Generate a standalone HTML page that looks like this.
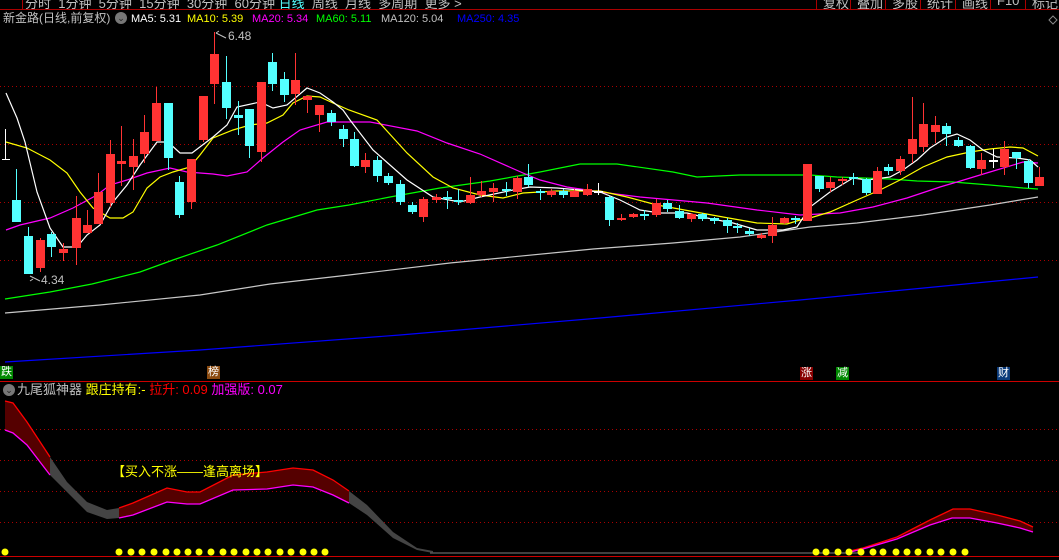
<!DOCTYPE html>
<html><head><meta charset="utf-8">
<style>
html,body{margin:0;padding:0;background:#000;width:1059px;height:560px;overflow:hidden;font-family:"Liberation Sans","Noto Sans CJK SC",sans-serif;}
.t{position:absolute;white-space:nowrap;font-size:12px;line-height:14px;}
.m{font-size:11px;top:12px;}
.tab{position:absolute;top:-7px;font-size:13px;color:#c0c0c0;white-space:nowrap;}
.btn{position:absolute;top:-7px;height:16px;font-size:13px;color:#c0c0c0;border-left:1px solid #a00;padding-left:6px;}
.mk{position:absolute;width:13px;height:13px;font-size:11px;line-height:13px;color:#fff;text-align:center;}
</style></head><body>
<div class="tab" style="left:25px;">分时 &nbsp;1分钟 &nbsp;5分钟 &nbsp;15分钟 &nbsp;30分钟 &nbsp;60分钟 <span style="color:#5ff">日线</span> &nbsp;周线 &nbsp;月线 &nbsp;多周期 &nbsp;更多 &gt;</div>
<div style="position:absolute;left:0;top:0;width:22px;height:9px;border-right:1px solid #a00;"></div>
<div class="btn" style="left:816px">复权</div>
<div class="btn" style="left:850px">叠加</div>
<div class="btn" style="left:885px">多股</div>
<div class="btn" style="left:920px">统计</div>
<div class="btn" style="left:955px">画线</div>
<div class="btn" style="left:990px">F10</div>
<div class="btn" style="left:1025px">标记</div>
<div style="position:absolute;left:0;top:9px;width:1059px;height:1px;background:#a00"></div>

<div class="t" style="left:3px;top:11px;color:#c0c0c0">新金路(日线,前复权)</div>
<div style="position:absolute;left:115px;top:12px;width:12px;height:12px;border-radius:6px;background:#777;color:#222;font-size:9px;line-height:12px;text-align:center">&#8964;</div>
<div class="t m" style="left:131px;color:#fff">MA5: 5.31</div>
<div class="t m" style="left:187px;color:#ff0">MA10: 5.39</div>
<div class="t m" style="left:252px;color:#f0f">MA20: 5.34</div>
<div class="t m" style="left:316px;color:#0f0">MA60: 5.11</div>
<div class="t m" style="left:381px;color:#c0c0c0">MA120: 5.04</div>
<div class="t m" style="left:457px;color:#00f">MA250: 4.35</div>

<svg width="1059" height="560" style="position:absolute;left:0;top:0" id="s">
<g stroke="#a00" stroke-dasharray="1,3" stroke-width="1">
<line x1="0" y1="86.5" x2="1059" y2="86.5"/><line x1="0" y1="144.5" x2="1059" y2="144.5"/>
<line x1="0" y1="202.5" x2="1059" y2="202.5"/><line x1="0" y1="260.5" x2="1059" y2="260.5"/>
<line x1="0" y1="429.5" x2="1059" y2="429.5"/><line x1="0" y1="460.5" x2="1059" y2="460.5"/>
<line x1="0" y1="491.5" x2="1059" y2="491.5"/><line x1="0" y1="522.5" x2="1059" y2="522.5"/>
</g>
<path d="M1053 16 l4 4 l-4 4 l-4 -4z" fill="none" stroke="#888"/>
<g fill="none" stroke-width="1.2">
<polyline stroke="#0000ff" points="5,362 200,350 400,335 600,318 800,300 1038,277"/>
<polyline stroke="#c8c8c8" points="5,313 100,305 200,295 270,284 349,275 450,263 593,249 673,243 740,237 810,227 857,223 923,215 990,205 1038,197"/>
<polyline stroke="#00ff00" points="5,299 50,292 92,284 140,272 173,260 217,245 267,225 317,210 349,205 390,197 440,188 490,181 540,172 580,164 617,164 673,172 697,177 740,175 810,175 837,177 890,179 917,181 953,182 990,185 1023,188 1038,189"/>
<polyline stroke="#ff00ff" points="6,230 20,225 50,218 73,208 97,195 110,185 127,180 147,173 170,168 187,172 213,174 227,176 247,172 263,158 283,142 300,130 327,122 370,122 417,131 447,143 480,154 523,173 540,180 567,187 600,192 640,197 707,203 757,210 800,215 840,213 873,207 907,198 940,187 957,182 990,172 1023,162 1038,163"/>
<polyline stroke="#ffff00" points="6,142 27,148 50,160 67,173 80,192 93,208 110,218 123,218 133,212 147,188 160,177 173,172 190,167 200,155 213,138 233,130 250,125 267,123 283,115 293,103 307,96 320,97 333,103 349,110 377,120 407,153 433,177 453,188 480,195 503,198 523,193 557,191 600,191 627,197 657,205 690,211 723,217 757,223 787,224 800,220 810,218 830,212 857,200 880,190 900,180 923,167 947,157 970,152 990,149 1010,147 1023,148 1038,156"/>
<polyline stroke="#ffffff" points="6,93 17,118 25,142 37,192 50,228 63,247 77,247 87,235 100,225 113,202 127,185 140,165 157,142 168,142 180,153 192,153 213,137 227,125 237,107 260,102 273,108 287,105 307,88 320,93 333,102 343,110 350,120 373,150 407,180 433,197 460,202 480,197 513,190 530,187 557,188 580,190 600,192 620,200 640,210 660,213 687,213 707,218 733,223 757,230 783,230 797,227 810,207 830,192 853,178 867,180 890,177 903,170 917,160 930,148 947,137 957,134 970,140 983,150 997,157 1017,158 1030,160 1038,167"/>
</g>
<line x1="5.5" y1="129" x2="5.5" y2="160" stroke="#fff"/>
<line x1="2" y1="159.5" x2="10" y2="159.5" stroke="#fff"/>
<g id="cd"></g>
<g fill="#c0c0c0" font-family="Liberation Sans" font-size="12">
<text x="228" y="40">6.48</text><text x="41" y="284">4.34</text></g>
<path d="M216 33 l10 5 M216 33 l3 -2" stroke="#c0c0c0" fill="none"/>
<path d="M30 276 l10 5 M30 281 l3 -2" stroke="#c0c0c0" fill="none"/>
<line x1="0" y1="381.5" x2="1059" y2="381.5" stroke="#c00"/>
<path d="M5,401 L13,403 L27,422 L50,457 L50,475 L27,445 L13,433 L5,430Z" fill="#550000"/>
<path d="M50,457 L67,482 L87,502 L107,510 L119,508 L119,518 L107,519 L87,512 L67,492 L50,475Z" fill="#444"/>
<path d="M119,508 L133,503 L167,488 L187,492 L200,492 L233,475 L267,472 L293,468 L313,470 L333,480 L349,491 L349,503 L333,495 L313,487 L293,485 L267,489 L233,490 L200,504 L187,504 L167,502 L133,515 L119,518Z" fill="#550000"/>
<path d="M349,491 L367,505 L393,532 L417,548 L433,551 L433,553 L417,550 L393,538 L367,515 L349,503Z" fill="#444"/>
<line x1="430" y1="553" x2="860" y2="553" stroke="#555" stroke-width="1.5"/>
<path d="M850,551 L863,548 L897,537 L930,520 L953,509 L970,509 L997,515 L1020,521 L1033,527 L1033,532 L1020,528 L997,523 L970,518 L952,518 L930,525 L897,539 L863,549 L850,552Z" fill="#550000"/>
<g fill="none" stroke-width="1.3">
<polyline stroke="#ff0000" points="5,401 13,403 27,422 50,457"/>
<polyline stroke="#ff00ff" points="5,430 13,433 27,445 50,475"/>
<polyline stroke="#ff0000" points="119,508 133,503 167,488 187,492 200,492 233,475 267,472 293,468 313,470 333,480 349,491"/>
<polyline stroke="#ff00ff" points="119,518 133,515 167,502 187,504 200,504 233,490 267,489 293,485 313,487 333,495 349,503"/>
<polyline stroke="#ff0000" points="850,551 863,548 897,537 930,520 953,509 970,509 997,515 1020,521 1033,527"/>
<polyline stroke="#ff00ff" points="850,552 863,549 897,539 930,525 952,518 970,518 997,523 1020,528 1033,532"/>
</g>
<g fill="#ffff00" id="dots"></g>
<line x1="0" y1="556.5" x2="1059" y2="556.5" stroke="#c00"/>
</svg>

<div class="mk" style="left:0;top:366px;background:#080">跌</div>
<div class="mk" style="left:207px;top:366px;background:#8a4a10">榜</div>
<div class="mk" style="left:800px;top:367px;background:#800">涨</div>
<div class="mk" style="left:836px;top:367px;background:#080">减</div>
<div class="mk" style="left:997px;top:367px;background:#0a3a7a">财</div>

<div style="position:absolute;left:3px;top:384px;width:12px;height:12px;border-radius:6px;background:#777;color:#222;font-size:9px;line-height:12px;text-align:center">&#8964;</div>
<div class="t" style="left:17px;top:383px;font-size:13px;color:#c0c0c0">九尾狐神器 <span style="color:#ff0">跟庄持有:-</span> <span style="color:#f00">拉升: 0.09</span> <span style="color:#f0f">加强版: 0.07</span></div>
<div class="t" style="left:112px;top:465px;font-size:13px;color:#ff0">【买入不涨——逢高离场】</div>

<script>
var C=[[16,200,222,169,222,'c'],[28,236,274,227,274,'c'],[40,240,268,238,272,'r'],[51,234,247,232,257,'c'],[63,249,253,243,261,'r'],[76,218,248,196,265,'r'],[87,225,233,210,233,'r'],[98,192,224,173,224,'r'],[110,154,203,140,207,'r'],[121,161,164,126,186,'r'],[133,156,167,139,190,'r'],[144,132,154,115,163,'r'],[156,103,141,87,141,'r'],[168,103,158,103,170,'c'],[179,182,215,176,218,'c'],[191,159,202,159,209,'r'],[203,96,140,96,142,'r'],[214,54,84,32,104,'r'],[226,82,108,56,119,'c'],[238,115,118,101,135,'c'],[249,109,146,109,158,'c'],[261,82,152,82,162,'r'],[272,62,84,53,91,'c'],[284,79,95,72,102,'c'],[295,80,94,53,105,'r'],[307,96,100,96,113,'r'],[319,105,115,105,132,'r'],[331,113,122,110,126,'c'],[343,129,139,125,147,'c'],[354,139,166,132,167,'c'],[365,160,167,153,173,'r'],[377,160,176,156,182,'c'],[388,176,183,173,185,'c'],[400,184,202,180,205,'c'],[412,205,212,202,214,'c'],[423,199,217,197,222,'r'],[436,197,200,194,203,'r'],[447,197,199,191,209,'c'],[458,200,202,189,205,'c'],[470,195,203,177,204,'r'],[481,191,195,181,197,'r'],[493,188,192,183,202,'r'],[506,189,191,182,196,'c'],[517,178,192,176,199,'r'],[528,177,185,164,187,'c'],[540,191,193,189,200,'c'],[551,191,195,189,197,'r'],[563,191,195,189,198,'c'],[574,191,197,189,197,'r'],[587,189,195,184,196,'r'],[598,191,193,183,195,'w'],[609,197,220,196,226,'c'],[621,218,220,214,221,'r'],[633,214,217,213,218,'r'],[644,214,216,210,220,'c'],[656,203,215,199,217,'r'],[667,203,209,200,212,'c'],[679,211,218,205,219,'c'],[691,214,219,213,222,'r'],[702,214,219,213,221,'c'],[714,218,221,217,224,'c'],[727,220,226,218,233,'c'],[737,226,228,223,233,'c'],[749,231,234,228,236,'c'],[761,235,238,233,239,'r'],[772,225,236,217,243,'r'],[784,218,223,217,224,'r'],[795,218,220,216,224,'c'],[807,164,221,164,221,'r'],[819,176,189,176,192,'c'],[830,182,188,177,192,'r'],[842,179,181,177,185,'r'],[853,177,179,173,185,'c'],[866,179,193,178,195,'c'],[877,171,194,167,194,'r'],[888,167,171,164,175,'c'],[900,159,171,156,175,'r'],[912,139,154,97,163,'r'],[923,124,147,103,152,'r'],[935,125,132,116,143,'r'],[946,126,134,123,146,'c'],[958,140,146,137,147,'c'],[970,146,168,145,169,'c'],[981,160,169,153,175,'r'],[993,160,162,149,168,'w'],[1004,149,167,141,175,'r'],[1016,152,158,152,169,'c'],[1028,161,183,159,188,'c'],[1039,177,186,167,186,'r']];
var col={r:'#ff3333',c:'#54ffff',w:'#ffffff'},h='';
C.forEach(function(a){var x=a[0],c=col[a[5]];
h+='<line x1="'+(x+0.5)+'" y1="'+a[3]+'" x2="'+(x+0.5)+'" y2="'+a[4]+'" stroke="'+c+'"/>';
var bh=Math.max(a[2]-a[1],1);h+='<rect x="'+(x-4)+'" y="'+a[1]+'" width="9" height="'+bh+'" fill="'+c+'"/>';});
document.getElementById('cd').innerHTML=h;
var D=[5,119,131,142,154,166,177,188,199,211,223,234,246,257,268,280,291,303,314,325,816,826,838,849,861,873,883,896,907,918,930,941,953,965],d='';
D.forEach(function(x){d+='<circle cx="'+x+'" cy="552" r="3.5"/>';});
document.getElementById('dots').innerHTML=d;
</script>
</body></html>
